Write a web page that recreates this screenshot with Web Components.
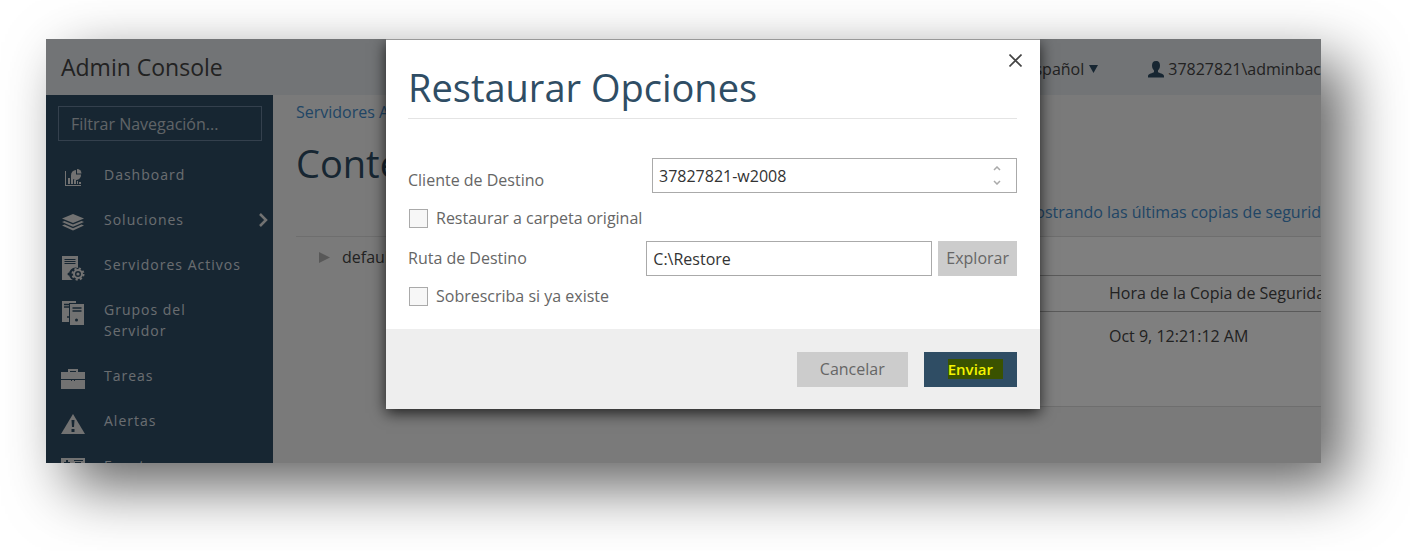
<!DOCTYPE html>
<html lang="es">
<head>
<meta charset="utf-8">
<title>Admin Console</title>
<style>
    body {
        margin: 0;
        background: white;
        color: #444;
        font: 16px/21px "Open Sans", "Noto Sans", sans-serif;
    }
</style>
</head>
<body>
<admin-console></admin-console>

<template id="admin-console">
<style>
    :host {
        display: block;
        box-sizing: border-box;
        height: 100vh;
        padding: 39px 89px 88px 46px;
        overflow: hidden;
    }
    .frame {
        position: relative;
        display: flex;
        flex-direction: column;
        height: 100%;
        background: #f5f5f5;
        box-shadow: 23px 23px 56px rgba(0, 0, 0, 0.62);
    }
    .body {
        flex: 1;
        display: flex;
        min-height: 0;
        overflow: hidden;
    }
    backup-content {
        flex: 1;
        min-width: 0;
    }
    .overlay {
        position: absolute;
        inset: 0;
        display: flex;
        justify-content: center;
        align-items: flex-start;
        padding-left: 59px;
        background: rgba(0, 0, 0, 0.5);
        overflow: hidden;
    }
</style>
<div class="frame">
    <top-bar name="Admin Console" language="Español" user="37827821\adminbac"></top-bar>
    <div class="body">
        <side-nav>
            <nav-item label="Dashboard">
                <svg width="18" height="18" viewBox="0 0 18 18" fill="#e4e4e4">
                    <path d="M1 2h1v14h15v1H1zM4 9h2v6H4zM7 6h2v9H7zM10 11h2v4h-2zM13 12h1v3h-1zM15 13h2v2h-2z"/>
                    <path d="M12 1v4.500h5A5 5 0 1 1 12 1z"/><path d="M13 0a4.500 4.500 0 0 1 4.500 4.500H13z"/>
                </svg>
            </nav-item>
            <nav-item label="Soluciones" expandable>
                <svg width="24" height="18" viewBox="0 0 24 18" fill="#e4e4e4">
                    <path d="M12 0l11 4.500L12 9 1 4.500z"/>
                    <path d="M1 8l2.500-1L12 10.600 20.500 7 23 8l-11 4.700z"/>
                    <path d="M1 11.600l2.500-1 8.500 3.600 8.500-3.600 2.500 1-11 4.800z"/>
                </svg>
            </nav-item>
            <nav-item label="Servidores Activos">
                <svg width="24" height="26" viewBox="0 0 24 26">
                    <path fill="#e4e4e4" d="M1 1h16v12a6 6 0 0 0-5 12H1z"/>
                    <path stroke="#2f4d64" d="M3.500 4.500h11M3.500 6.500h11M3.500 8.500h11"/>
                    <circle cx="8" cy="19" r="1.500" fill="#2f4d64"/>
                    <circle cx="17" cy="19" r="4" fill="none" stroke="#e4e4e4" stroke-width="2"/>
                    <circle cx="17" cy="19" r="5.500" fill="none" stroke="#e4e4e4" stroke-width="2" stroke-dasharray="2.200 2.120"/>
                    <circle cx="17" cy="19" r="1.600" fill="#e4e4e4"/>
                </svg>
            </nav-item>
            <nav-item label="Grupos del Servidor">
                <svg width="24" height="26" viewBox="0 0 24 26">
                    <path fill="#e4e4e4" d="M1 1h14v2H8v19H1zM9 4h14v21H9z"/>
                    <path stroke="#2f4d64" stroke-width="1.500" d="M3 4.500h5M3 7h5M11.500 8h9M11.500 11h9"/>
                    <circle cx="15.500" cy="20" r="1.500" fill="#2f4d64"/>
                    <circle cx="7" cy="17" r="1" fill="#2f4d64"/>
                </svg>
            </nav-item>
            <nav-item label="Tareas">
                <svg width="24" height="20" viewBox="0 0 24 20" fill="#e4e4e4">
                    <path d="M7 3V0h10v3h7v7H0V3zM9 3h6V2H9z" fill-rule="evenodd"/>
                    <path d="M0 11h10v1h1v-1h2v1h1v-1h10v9H0z"/>
                </svg>
            </nav-item>
            <nav-item label="Alertas">
                <svg width="24" height="20" viewBox="0 0 24 20">
                    <path fill="#e4e4e4" d="M12 0l12 20H0z"/>
                    <path fill="#2f4d64" d="M10.500 6h3l-.5 7h-2zM10.500 15h3v3h-3z"/>
                </svg>
            </nav-item>
            <nav-item label="Eventos">
                <svg width="24" height="22" viewBox="0 0 24 22">
                    <path fill="#e4e4e4" d="M0 0h24v22H0z"/>
                    <path fill="#2f4d64" d="M5 2h2v2h2v2H3V4h2zM13 2h9v1h-9zM14 4h6v1h-6z"/>
                </svg>
            </nav-item>
        </side-nav>
        <backup-content></backup-content>
    </div>
    <div class="overlay">
        <modal-dialog heading="Restaurar Opciones">
            <restore-form></restore-form>
            <ui-button slot="footer" class="cancel">Cancelar</ui-button>
            <ui-button slot="footer" primary>Enviar</ui-button>
        </modal-dialog>
    </div>
</div>
</template>

<template id="top-bar">
<style>
    :host {
        display: flex;
        align-items: center;
        height: 56px;
        padding-left: 15px;
        background: #e5e8ec;
        white-space: nowrap;
        overflow: hidden;
    }
    .name { flex: 1; font-size: 23px; line-height: 32px; }
    button {
        display: flex;
        align-items: center;
        gap: 5px;
        padding: 4px 0 0;
        border: 0;
        background: none;
        color: inherit;
        font: inherit;
    }
    .user { margin-left: 50px; gap: 4px; }
</style>
<div class="name"></div>
<button class="language"><span></span>
    <svg width="9" height="8" viewBox="0 0 9 8"><path fill="#2f4d64" d="M0 0h9L4.500 8z"/></svg>
</button>
<button class="user">
    <svg width="16" height="17" viewBox="0 0 16 17"><path fill="#2f4d64" d="M8 0c3 0 4 2 4 4.500C12 7 11 8 10 9.500V11c1 1.300 6 1.500 6 4v1.500H0V15c0-2.500 5-2.700 6-4V9.500C5 8 4 7 4 4.500 4 2 5 0 8 0z"/></svg>
    <span></span>
</button>
</template>

<template id="side-nav">
<style>
    :host {
        display: block;
        box-sizing: border-box;
        flex: none;
        width: 227px;
        padding: 11px 11px 0 12px;
        background: #2f4d64;
    }
    input {
        display: block;
        box-sizing: border-box;
        width: 100%;
        height: 35px;
        margin: 0 0 11px;
        padding: 0 12px;
        border: 1px solid #68809a;
        border-radius: 0;
        background: transparent;
        color: #dde3e8;
        font: inherit;
    }
    input::placeholder { color: #c0c8cf; opacity: 1; }
    nav { margin-right: -6px; }
</style>
<input type="text" placeholder="Filtrar Navegación..." aria-label="Filtrar Navegación">
<nav><slot></slot></nav>
</template>

<template id="nav-item">
<style>
    :host { display: block; }
    a {
        display: flex;
        align-items: flex-start;
        padding: 12px 0;
        color: #d4dbe0;
        font-size: 14px;
        letter-spacing: 1px;
        text-decoration: none;
    }
    .icon {
        flex: none;
        display: flex;
        justify-content: center;
        align-items: center;
        width: 30px;
        height: 21px;
        padding-top: 3px;
        margin: 0 16px -3px 0;
    }
    .label { flex: 1; padding-right: 12px; }
    .arrow { align-self: center; }
    :host(:not([expandable])) .arrow { visibility: hidden; }
</style>
<a href="#">
    <span class="icon"><slot></slot></span>
    <span class="label"></span>
    <svg class="arrow" width="10" height="14" viewBox="0 0 10 14"><path d="M2 1l6 6-6 6" fill="none" stroke="#e4e4e4" stroke-width="2.500"/></svg>
</a>
</template>

<template id="backup-content">
<style>
    :host {
        display: block;
        padding-left: 23px;
        white-space: nowrap;
        overflow: hidden;
    }
    a { color: #428bca; text-decoration: none; }
    .crumbs { padding-top: 7px; }
    h1 {
        margin: 14px 0 13px;
        color: #2f4d64;
        font-size: 38px;
        font-weight: 400;
        line-height: 52px;
    }
    .filter { padding-bottom: 13px; text-align: right; border-bottom: 1px solid #dcdcdc; }
    .columns { display: flex; }
    .tree { flex: 1; padding: 10px 0 0 23px; }
    .tree svg { margin-right: 12px; }
    table {
        table-layout: fixed;
        width: 320px;
        border-spacing: 0;
        background: white;
        border-bottom: 1px solid #dcdcdc;
    }
    caption { height: 38px; background: white; }
    th, td { padding: 0 0 0 108px; text-align: left; font-weight: 400; }
    th { height: 35px; border-top: 1px solid #b4b4b4; border-bottom: 1px solid #b4b4b4; }
    td { height: 80px; padding-top: 14px; vertical-align: top; }
</style>
<div class="crumbs"><a href="#">Servidores A</a></div>
<h1>Conte</h1>
<div class="filter"><a href="#">Mostrando las últimas copias de segurid</a></div>
<div class="columns">
    <div class="tree"><svg width="11" height="11" viewBox="0 0 11 11"><path fill="#b0b0b0" d="M0 0l11 5.500L0 11z"/></svg>default</div>
    <table>
        <caption></caption>
        <thead><tr><th>Hora de la Copia de Segurida</th></tr></thead>
        <tbody><tr><td>Oct 9, 12:21:12 AM</td></tr></tbody>
    </table>
</div>
</template>

<template id="modal-dialog">
<style>
    :host {
        display: block;
        position: relative;
        box-sizing: border-box;
        width: 654px;
        border-top: 1px solid #999;
        background: white;
        box-shadow: 0 4px 14px rgba(0, 0, 0, 0.75);
    }
    .close {
        position: absolute;
        top: 12px;
        right: 16px;
        display: flex;
        padding: 2px;
        border: 0;
        background: none;
    }
    h2 {
        margin: 0 23px 0 22px;
        padding: 21px 0 5px;
        border-bottom: 1px solid #e4e4e4;
        color: #2f4d64;
        font-size: 38px;
        font-weight: 400;
        line-height: 52px;
    }
    .content { padding: 39px 23px 13px 22px; }
    footer {
        display: flex;
        justify-content: flex-end;
        gap: 16px;
        padding: 23px 23px 22px;
        background: #eee;
    }
</style>
<button class="close" aria-label="Cerrar">
    <svg width="13" height="13" viewBox="0 0 13 13"><path d="M0.500 0.500l12 12M12.500 0.500l-12 12" stroke="#444" stroke-width="1.600"/></svg>
</button>
<h2></h2>
<div class="content"><slot></slot></div>
<footer><slot name="footer"></slot></footer>
</template>

<template id="ui-button">
<style>
    :host { display: block; }
    button {
        height: 35px;
        padding: 0 var(--button-padding, 24px);
        border: 0;
        background: #ccc;
        color: #666;
        font: inherit;
    }
    :host(.cancel) { --button-padding: 23px; }
    :host(.browse) { --button-padding: 8px; }
    :host([primary]) button { background: #2f4d64; }
    /* highlighted label runs a little past its text */
    :host([primary]) span {
        margin-right: -10px;
        padding-right: 10px;
        background: #3a5200;
        color: #f4f400;
        font-size: 15px;
        font-weight: 600;
    }
</style>
<button type="button"><span><slot></slot></span></button>
</template>

<template id="restore-form">
<style>
    :host { display: block; color: #666; }
    form { display: flex; flex-direction: column; }
    .row { display: flex; align-items: center; height: 35px; }
    .row > label { flex: 1; }
    .client > label { padding-top: 10px; }
    .select { position: relative; width: 365px; }
    .select svg { position: absolute; right: 16px; top: 8px; }
    select, input[type=text] {
        display: block;
        box-sizing: border-box;
        height: 35px;
        border: 1px solid #aaa;
        border-radius: 0;
        background: white;
        color: #333;
        font: inherit;
    }
    select { width: 100%; padding: 2px 6px 0; appearance: none; }
    input[type=text] { width: 286px; margin-right: 6px; padding: 0 6px; }
    .check {
        display: flex;
        align-items: center;
        gap: 8px;
        box-sizing: border-box;
        height: 48px;
        padding: 2px 0 0 1px;
    }
    .check:last-child { height: 40px; padding-top: 0; }
    input[type=checkbox] {
        appearance: none;
        box-sizing: border-box;
        width: 19px;
        height: 19px;
        margin: 0;
        border: 1px solid #aaa;
        background: #f7f7f7;
    }
</style>
<form>
    <div class="row client">
        <label for="client">Cliente de Destino</label>
        <div class="select">
            <select id="client"><option>37827821-w2008</option></select>
            <svg width="8" height="19" viewBox="0 0 8 19"><path d="M1 4l3-3 3 3M1 15l3 3 3-3" fill="none" stroke="#aaa" stroke-width="1.500"/></svg>
        </div>
    </div>
    <div class="check">
        <input type="checkbox" id="original"><label for="original">Restaurar a carpeta original</label>
    </div>
    <div class="row">
        <label for="path">Ruta de Destino</label>
        <input type="text" id="path" value="C:\Restore">
        <ui-button class="browse">Explorar</ui-button>
    </div>
    <div class="check">
        <input type="checkbox" id="overwrite"><label for="overwrite">Sobrescriba si ya existe</label>
    </div>
</form>
</template>

<script>
class TemplateElement extends HTMLElement {
    constructor() {
        super();
        this.attachShadow({mode: 'open'});
        let template = document.getElementById(this.localName);
        this.shadowRoot.appendChild(template.content.cloneNode(true));
    }

    setText(selector, attribute) {
        this.shadowRoot.querySelector(selector).textContent = this.getAttribute(attribute);
    }
}

class TopBar extends TemplateElement {
    connectedCallback() {
        this.setText('.name', 'name');
        this.setText('.language span', 'language');
        this.setText('.user span', 'user');
    }
}

class NavItem extends TemplateElement {
    connectedCallback() {
        this.setText('.label', 'label');
    }
}

class ModalDialog extends TemplateElement {
    connectedCallback() {
        this.setText('h2', 'heading');
    }
}

window.customElements.define('top-bar', TopBar);
window.customElements.define('nav-item', NavItem);
window.customElements.define('side-nav', class SideNav extends TemplateElement {});
window.customElements.define('backup-content', class BackupContent extends TemplateElement {});
window.customElements.define('ui-button', class UiButton extends TemplateElement {});
window.customElements.define('restore-form', class RestoreForm extends TemplateElement {});
window.customElements.define('modal-dialog', ModalDialog);
window.customElements.define('admin-console', class AdminConsole extends TemplateElement {});
</script>
</body>
</html>
